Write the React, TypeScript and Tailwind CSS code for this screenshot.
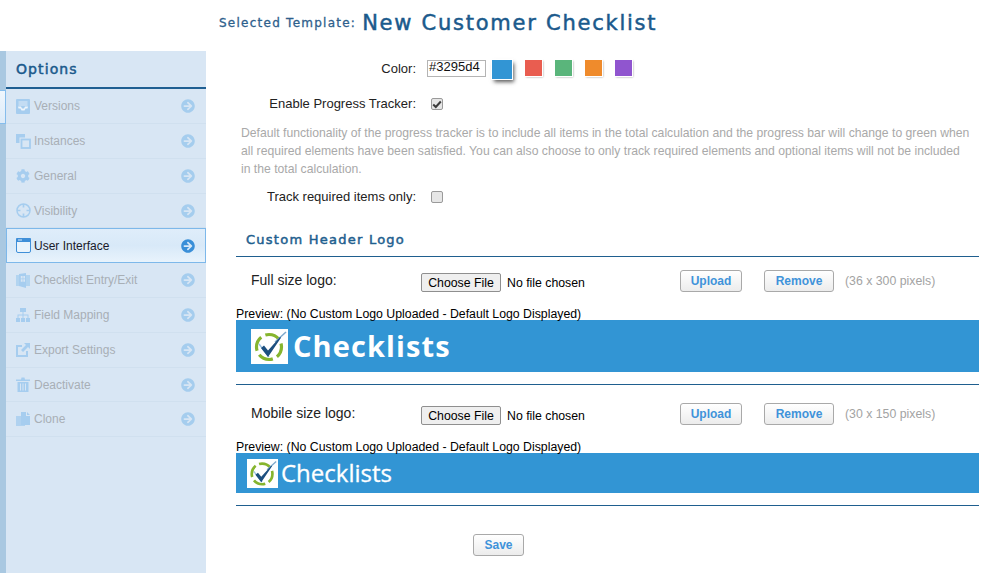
import React from "react";
import { FaCog, FaArrowCircleRight } from "react-icons/fa";

const LIGHT = "#d8e6f4";

const Tray = () => (
  <svg width="14" height="15" viewBox="0 0 14 15" fill="currentColor">
    <rect width="14" height="15" rx="1" />
    <path d="M2.500 2h9v5h-9z" fill="#c3dcf3" />
    <path d="M2 7.500h3l1 2h2l1-2h3l-.5 2H9.500l-1 2h-3l-1-2H2.500z" fill="#eef5fb" />
  </svg>
);
const Layers = () => (
  <svg width="15" height="15" viewBox="0 0 15 15" fill="none" stroke="currentColor">
    <path d="M0 0h9v3.500H3.500V9H0z" fill="currentColor" stroke="none" />
    <rect x="5.500" y="5.500" width="8.500" height="8.500" strokeWidth="1.800" />
  </svg>
);
const Cross = () => (
  <svg width="15" height="15" viewBox="0 0 15 15" fill="none" stroke="currentColor" strokeWidth="1.500">
    <circle cx="7.500" cy="7.500" r="6.500" />
    <path d="M7.500 1v3.500M7.500 10.500V14M1 7.500h3.500M10.500 7.500H14" strokeWidth="1.700" />
  </svg>
);
const Windowed = () => (
  <svg width="15" height="15" viewBox="0 0 15 15">
    <rect x="0.500" y="0.500" width="14" height="14" rx="1.500" fill="#eaf4fc" stroke="#3f8fd8" />
    <rect x="0" y="0" width="15" height="4" rx="1" fill="#3f8fd8" />
    <rect x="2" y="1.500" width="4" height="1" fill="#d5e8fa" />
  </svg>
);
const Door = () => (
  <svg width="14" height="15" viewBox="0 0 14 15" fill="currentColor">
    <path d="M0 2h4v11H0zM10 2h4v11h-4z" opacity="0.75" />
    <path d="M3 1l7-1v15l-7-2z" />
    <path d="M4.800 3h1.800v2.500H4.800zM7.300 3h1.700v2.500H7.300zM4.800 6.200h1.800v2.500H4.800zM7.300 6.200h1.700v2.500H7.300z" fill={LIGHT} />
  </svg>
);
const Sitemap = () => (
  <svg width="14" height="14" viewBox="0 0 14 14" fill="currentColor">
    <path d="M4 0h6v4H4zM0 10h4v4H0zM5 10h4v4H5zM10 10h4v4h-4z" />
    <path d="M6.500 4h1v2.500H12.500V10h-1V7.500h-4V10h-1V7.500h-4V10h-1V6.500h5z" />
  </svg>
);
const Export = () => (
  <svg width="14" height="14" viewBox="0 0 14 14" fill="none" stroke="currentColor">
    <path d="M6 3H1v10h10V8" strokeWidth="2" />
    <path d="M8 0h6v6l-2-2-5 5-2-2 5-5z" fill="currentColor" stroke="none" />
  </svg>
);
const Trash = () => (
  <svg width="14" height="15" viewBox="0 0 14 15" fill="currentColor">
    <path d="M0 2.500h5l.5-2h3l.5 2h5V4H0z" />
    <path d="M1.500 5h11v10h-11zM4 6.500v7h1v-7zM6.500 6.500v7h1v-7zM9 6.500v7h1v-7z" fillRule="evenodd" />
  </svg>
);
const Clone = () => (
  <svg width="14" height="14" viewBox="0 0 14 14" fill="currentColor">
    <path d="M0 4h5v8h4v2H0z" opacity="0.8" />
    <path d="M5 0h5v4h4v9H5zM11 0l3 3h-3z" />
  </svg>
);

const items: { label: string; icon: React.ReactNode; h: string; active?: boolean }[] = [
  { label: "Versions", icon: <Tray />, h: "h-[35px]" },
  { label: "Instances", icon: <Layers />, h: "h-[35px]" },
  { label: "General", icon: <FaCog size={14} />, h: "h-[35px]" },
  { label: "Visibility", icon: <Cross />, h: "h-[34px]" },
  { label: "User Interface", icon: <Windowed />, h: "h-[35px]", active: true },
  { label: "Checklist Entry/Exit", icon: <Door />, h: "h-[35px]" },
  { label: "Field Mapping", icon: <Sitemap />, h: "h-[35px]" },
  { label: "Export Settings", icon: <Export />, h: "h-[35px]" },
  { label: "Deactivate", icon: <Trash />, h: "h-[34px]" },
  { label: "Clone", icon: <Clone />, h: "h-[35px]" },
];

const Check = ({ checked }: { checked?: boolean }) => (
  <span className="flex h-[12px] w-[12px] items-center justify-center rounded-[2px] border border-[#9a9a9a] bg-[#e6e6e6]">
    {checked && (
      <svg width="10" height="9" viewBox="0 0 10 9">
        <path d="M1.200 4.500 3.800 7 8.800 1.500" fill="none" stroke="#3c3c3c" strokeWidth="2" />
      </svg>
    )}
  </span>
);

const LogoMark = ({ box }: { box: string }) => (
  <span className={`flex shrink-0 items-center justify-center bg-white ${box}`}>
    <svg viewBox="0 0 37 35" className="h-full w-full">
      <circle cx="18" cy="18" r="12.500" fill="none" stroke="#86b52e" strokeWidth="3.200" strokeDasharray="15 4.600" strokeDashoffset="4" />
      <path d="M8 15l10 13" stroke="#9cc3e3" strokeWidth="1.500" />
      <path d="M24 13L35 3" stroke="#7fa9cc" strokeWidth="1.500" />
      <path d="M10 19l3-2.500 4 5L29 8l1 .8L17 28z" fill="#1c4f7f" />
    </svg>
  </span>
);

const SmallBtn = ({ children, w }: { children: React.ReactNode; w: string }) => (
  <button className={`h-[22px] ${w} rounded-[3px] border border-[#a9a9a9] bg-gradient-to-b from-white to-[#ececec] text-[12px] font-bold text-[#3f93da]`}>
    {children}
  </button>
);

const UploadRow = ({ label, size, mt }: { label: string; size: string; mt: string }) => (
  <div className={`flex h-[22px] items-center ${mt}`}>
    <span className="ml-[15px] w-[170px] -mt-[3px] text-[14px] leading-none text-[#222]">{label}</span>
    <input
      type="file"
      className="mt-[4px] w-[259px] text-[12.300px] text-black file:mr-[6px] file:h-[19px] file:w-[80px] file:rounded-[2px] file:border file:border-[#8f8f8f] file:bg-[#efefef] file:text-[12.300px] file:text-black"
    />
    <SmallBtn w="w-[62px]">Upload</SmallBtn>
    <span className="ml-[22px]"><SmallBtn w="w-[70px]">Remove</SmallBtn></span>
    <span className="ml-[11px] text-[12.300px] text-[#a3a3a3]">{size}</span>
  </div>
);

const Preview = () => (
  <div className="mt-[16px] h-[12px] text-[12.300px] leading-[12px] text-black">Preview: (No Custom Logo Uploaded - Default Logo Displayed)</div>
);

const Swatch = ({ c, active }: { c: string; active?: boolean }) =>
  active ? (
    <span className={`h-[19px] w-[20px] ${c} shadow-[2px_3px_4px_rgba(0,0,0,0.65)] outline outline-1 outline-white`} />
  ) : (
    <span className={`h-[16px] w-[17px] ${c} shadow-[1px_1px_2px_rgba(0,0,0,0.4)] outline outline-1 outline-white`} />
  );

export default function App() {
  return (
    <div className="flex h-[573px] w-[981px] flex-col overflow-hidden bg-white font-['Liberation_Sans',Arial,sans-serif]">
      <header className="flex h-[51px] items-start pl-[219px] pt-[10px] font-['DejaVu_Sans',Verdana,sans-serif]">
        <span className="mt-[4px] text-[12px] tracking-[1.250px] text-[#2e608c] [-webkit-text-stroke:0.3px_#2e608c]">Selected Template:</span>
        <span className="ml-[6px] text-[21px] leading-[27px] tracking-[1.750px] text-[#1b5a8c] [-webkit-text-stroke:0.5px_#1b5a8c]">New Customer Checklist</span>
      </header>
      <div className="flex min-h-0 flex-1">
        <aside className="flex w-[206px] shrink-0 bg-[#d8e6f4]">
          <div className="w-[6px] shrink-0 bg-[#a9c8e1] pt-[39px]">
            <div className="h-[34px] border-y border-r border-[#86bdec] bg-gradient-to-b from-[#f0f7fd] to-[#dcebf9]" />
          </div>
          <div className="min-w-0 flex-1">
            <div className="flex h-[38px] items-center border-b-[2px] border-[#1f5f92] pl-[10px] font-['DejaVu_Sans',Verdana,sans-serif] text-[14px] tracking-[1.100px] text-[#1b5a8c] [-webkit-text-stroke:0.5px_#1b5a8c]">
              Options
            </div>
            <nav>
              {items.map((it) => (
                <div
                  key={it.label}
                  className={`flex ${it.h} items-center ${
                    it.active
                      ? "border border-[#7db8ea] bg-gradient-to-b from-[#dfedfa] via-[#d8e9f8] to-[#e8f3fc] pl-[9px] pr-[10px] text-[#1a1a2a]"
                      : "border-b border-[#d0e0ef] pl-[10px] pr-[11px] text-[#a8afb6]"
                  }`}
                >
                  <span className={`flex w-[18px] items-center ${it.active ? "" : "text-[#a6cdef]"}`}>{it.icon}</span>
                  <span className="flex-1 text-[12px]">{it.label}</span>
                  <FaArrowCircleRight size={14} className={it.active ? "text-[#3a8fd8]" : "text-[#a5cdee]"} />
                </div>
              ))}
            </nav>
          </div>
        </aside>
        <main className="min-w-0 flex-1 pr-[2px] text-[13px] text-[#222]">
          <div className="mt-[9px] flex h-[20px] items-start">
            <label className="w-[210px] text-right leading-[17px]">Color:</label>
            <span className="ml-[11px] flex h-[17px] w-[59px] items-start border border-[#b4b4b4] pl-[1px] text-[13px] leading-[12px] text-[#111]">#3295d4</span>
            <div className="ml-[6px] flex items-start gap-[13px]">
              <Swatch c="bg-[#3295d4]" active />
              <Swatch c="bg-[#e95d50]" />
              <Swatch c="bg-[#5ab57b]" />
              <Swatch c="bg-[#ef8b2c]" />
              <Swatch c="bg-[#9055cf]" />
            </div>
          </div>
          <div className="mt-[15px] flex h-[18px] items-center">
            <label className="w-[210px] text-right">Enable Progress Tracker:</label>
            <span className="ml-[15px]"><Check checked /></span>
          </div>
          <p className="ml-[35px] mt-[11px] w-[731px] text-[12.200px] leading-[18px] text-[#a9a9a9]">
            Default functionality of the progress tracker is to include all items in the total calculation and the progress bar will change to green when all required elements have been satisfied. You can also choose to only track required elements and optional items will not be included in the total calculation.
          </p>
          <div className="mt-[10px] flex h-[18px] items-center">
            <label className="w-[210px] text-right">Track required items only:</label>
            <span className="ml-[15px]"><Check /></span>
          </div>
          <div className="ml-[30px] mt-[16px]">
            <h2 className="h-[35px] border-b border-[#1f5f8f] pl-[10px] pt-[10px] font-['DejaVu_Sans',Verdana,sans-serif] text-[13px] leading-[16px] tracking-[1.250px] text-[#1f5f8f] [-webkit-text-stroke:0.5px_#1f5f8f]">
              Custom Header Logo
            </h2>
            <UploadRow label="Full size logo:" size="(36 x 300 pixels)" mt="mt-[13px]" />
            <Preview />
            <div className="flex h-[52px] items-center bg-[#3295d4] pl-[15px]">
              <LogoMark box="h-[35px] w-[37px]" />
              <span className="ml-[5px] pb-[2px] font-['Open_Sans',sans-serif] text-[29px] font-bold leading-none tracking-[1.100px] text-white">Checklists</span>
            </div>
            <div className="mt-[12px] border-t border-[#1f5f8f]" />
            <UploadRow label="Mobile size logo:" size="(30 x 150 pixels)" mt="mt-[18px]" />
            <Preview />
            <div className="flex h-[40px] items-center bg-[#3295d4] pl-[11px]">
              <LogoMark box="h-[29px] w-[31px]" />
              <span className="ml-[3px] font-['Open_Sans',sans-serif] text-[24px] leading-none font-normal text-white [-webkit-text-stroke:0.3px_white]">Checklists</span>
            </div>
            <div className="mt-[12px] border-t border-[#1f5f8f]" />
            <div className="ml-[237px] mt-[28px]">
              <SmallBtn w="w-[51px]">Save</SmallBtn>
            </div>
          </div>
        </main>
      </div>
    </div>
  );
}
